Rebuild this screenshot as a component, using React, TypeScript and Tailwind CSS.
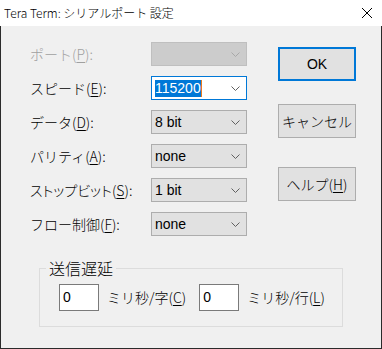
import React from 'react';

const jp = "font-['Noto_Sans_CJK_JP','Noto_Sans',sans-serif] font-light";

function Chevron({ color }: { color: string }) {
  return (
    <svg width="9" height="5" viewBox="0 0 9 5" className="shrink-0">
      <polyline points="0.5,0.5 4.5,4.5 8.5,0.5" fill="none" stroke={color} strokeWidth="1" />
    </svg>
  );
}

function Mn({ c }: { c: string }) {
  return (
    <>
      (<span className="underline underline-offset-2">{c}</span>)
    </>
  );
}

function Row({
  label,
  mn,
  value,
  kind = 'normal',
  tight,
}: {
  label: string;
  mn: string;
  value?: string;
  kind?: 'normal' | 'disabled' | 'focused';
  tight?: boolean;
}) {
  const box =
    kind === 'disabled'
      ? 'bg-[#cccccc] border-[#bfbfbf]'
      : kind === 'focused'
        ? 'bg-white border-[#0078d7]'
        : 'bg-[#e1e1e1] border-[#adadad]';
  return (
    <div className="flex h-6 items-center">
      <div
        className={`w-[121px] text-[14px] ${jp} ${kind === 'disabled' ? 'text-[#a0a0a0]' : 'text-black'} ${
          tight ? "[font-feature-settings:'palt']" : ''
        }`}
      >
        {label}
        <Mn c={mn} />:
      </div>
      <div className={`flex h-6 w-24 items-center justify-between border pl-[3px] pr-[6px] ${box}`}>
        {kind === 'focused' ? (
          <span className="flex items-center">
            <span className="bg-[#0078d7] font-['Liberation_Sans',sans-serif] text-[14px] leading-[17px] text-white">
              {value}
            </span>
            <span className="h-[17px] w-px bg-[#e8791f]" />
          </span>
        ) : (
          <span className="font-['Liberation_Sans',sans-serif] text-[14px] text-black">{value}</span>
        )}
        <Chevron color={kind === 'disabled' ? '#a8a8a8' : '#606060'} />
      </div>
    </div>
  );
}

function Btn({ children, primary }: { children: React.ReactNode; primary?: boolean }) {
  return (
    <div
      className={`flex h-[34px] w-[78px] items-center justify-center bg-[#e1e1e1] text-[14px] ${jp} text-black ${
        primary ? 'border-2 border-[#0078d7]' : 'border border-[#adadad]'
      }`}
    >
      {children}
    </div>
  );
}

export default function App() {
  return (
    <div className="h-[349px] w-[382px] bg-[#f0f0f0]">
      <div className="flex h-[26px] items-center justify-between bg-white pl-1 pr-[10px]">
        <span className={`text-[12px] ${jp} text-black`}>Tera Term: シリアルポート 設定</span>
        <svg width="10" height="10" viewBox="0 0 10 10">
          <line x1="0" y1="0" x2="10" y2="10" stroke="#000" strokeWidth="1" />
          <line x1="10" y1="0" x2="0" y2="10" stroke="#000" strokeWidth="1" />
        </svg>
      </div>
      <div className="h-[323px] border-x border-b border-[#2b2b2b]">
        <div className="flex">
          <div className="flex flex-col gap-[10px] pl-[29px] pt-4">
            <Row label="ポート" mn="P" kind="disabled" />
            <Row label="スピード" mn="E" value="115200" kind="focused" />
            <Row label="データ" mn="D" value="8 bit" />
            <Row label="パリティ" mn="A" value="none" />
            <Row label="ストップビット" mn="S" value="1 bit" tight />
            <Row label="フロー制御" mn="F" value="none" />
          </div>
          <div className="ml-[31px] flex flex-col pt-[21px]">
            <Btn primary>
              <span className="font-['Liberation_Sans',sans-serif]">OK</span>
            </Btn>
            <div className="mt-[23px]">
              <Btn>キャンセル</Btn>
            </div>
            <div className="mt-[29px]">
              <Btn>
                ヘルプ<Mn c="H" />
              </Btn>
            </div>
          </div>
        </div>
        <fieldset className="ml-[38px] mt-[24px] w-[304px] border border-[#dcdcdc] pb-[15px] pl-[19px] pt-[8px]">
          <legend className={`-ml-[13px] px-[3px] text-[16px] leading-4 ${jp} text-black`}>送信遅延</legend>
          <div className={`flex items-center text-[14px] ${jp} text-black`}>
            <div className="flex h-[27px] w-10 items-center border border-[#7a7a7a] bg-white pl-[3px] font-['Liberation_Sans',sans-serif]">
              0
            </div>
            <span className="ml-2">
              ミリ秒/字<Mn c="C" />
            </span>
            <div className="ml-[13px] flex h-[27px] w-10 items-center border border-[#7a7a7a] bg-white pl-[3px] font-['Liberation_Sans',sans-serif]">
              0
            </div>
            <span className="ml-2">
              ミリ秒/行<Mn c="L" />
            </span>
          </div>
        </fieldset>
      </div>
    </div>
  );
}
